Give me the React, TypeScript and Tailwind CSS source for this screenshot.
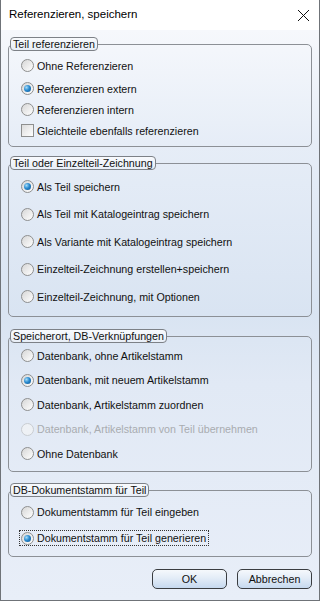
import { ReactNode } from 'react'

const font = "font-['Liberation_Sans',Arial,sans-serif]"

function Radio({ checked, disabled }: { checked?: boolean; disabled?: boolean }) {
  return (
    <span
      className={`flex h-[13px] w-[13px] shrink-0 items-center justify-center rounded-full border ${
        disabled
          ? 'border-[#c9cdd2] bg-[#eef1f5]'
          : 'border-[#8e8f8f] bg-[linear-gradient(135deg,#d6d6d6,#ffffff)]'
      }`}
    >
      {checked && (
        <span className="h-[7px] w-[7px] rounded-full bg-[radial-gradient(circle_at_35%_35%,#a6dcf8_0%,#2a8bd0_45%,#0b4f8c_100%)]" />
      )}
    </span>
  )
}

function Check() {
  return (
    <span className="flex h-[13px] w-[13px] shrink-0 border border-[#8e8f8f] bg-[linear-gradient(135deg,#dcdcdc,#ffffff)]" />
  )
}

function Row({
  label,
  checked,
  disabled,
  box,
  focus,
  h,
}: {
  label: string
  checked?: boolean
  disabled?: boolean
  box?: boolean
  focus?: boolean
  h: string
}) {
  return (
    <div className={`flex items-center pl-[12px] ${h}`}>
      <div
        className={`flex items-center gap-[3px] ${
          focus ? 'outline outline-1 outline-dotted outline-[#333] -ml-px pl-px pr-[2px]' : ''
        }`}
      >
        {box ? <Check /> : <Radio checked={checked} disabled={disabled} />}
        <span className={`text-[10.7px] leading-[14px] ${disabled ? 'text-[#a9acb0]' : 'text-[#111]'}`}>{label}</span>
      </div>
    </div>
  )
}

function Group({ title, children, className }: { title: string; children: ReactNode; className?: string }) {
  return (
    <div className={`relative rounded-[5px] border border-[#8c9096] ${className ?? ''}`}>
      <div className="absolute left-[1px] top-[-8px] rounded-[4px] border border-[#7d8187] bg-[linear-gradient(#f8fafd,#e8eef7)] px-[2px] text-[10.7px] leading-[12px] text-[#111]">
        {title}
      </div>
      {children}
    </div>
  )
}

export default function App() {
  return (
    <div className={`flex h-[601px] w-[320px] flex-col border-x border-b border-[#6f7378] ${font}`}>
      <div className="flex h-[30px] shrink-0 items-center justify-between bg-white pl-[8px] pr-[8px]">
        <span className="text-[11.5px] text-[#000]">Referenzieren, speichern</span>
        <svg width="13" height="13" viewBox="0 0 13 13" className="mr-[1px]">
          <path d="M1 1 L12 12 M12 1 L1 12" stroke="#111" strokeWidth="1" fill="none" />
        </svg>
      </div>

      <div className="flex flex-1 flex-col bg-[linear-gradient(#f6f8fc_0%,#e6edf7_20%,#d9e4f2_50%,#e1e9f5_62%,#e8eef8_100%)] px-[7px] pt-[14px]">
        <Group title="Teil referenzieren" className="pb-[5px] pt-[10px]">
          <Row h="h-[21px]" label="Ohne Referenzieren" />
          <Row h="h-[21px] mt-[2px]" label="Referenzieren extern" checked />
          <Row h="h-[21px]" label="Referenzieren intern" />
          <Row h="h-[21px]" label="Gleichteile ebenfalls referenzieren" box />
        </Group>

        <Group title="Teil oder Einzelteil-Zeichnung" className="mt-[16px] pb-[5px] pt-[9px]">
          <Row h="h-[27.5px]" label="Als Teil speichern" checked />
          <Row h="h-[27.5px]" label="Als Teil mit Katalogeintrag speichern" />
          <Row h="h-[27.5px]" label="Als Variante mit Katalogeintrag speichern" />
          <Row h="h-[27.5px]" label="Einzelteil-Zeichnung erstellen+speichern" />
          <Row h="h-[27.5px]" label="Einzelteil-Zeichnung, mit Optionen" />
        </Group>

        <Group title="Speicherort, DB-Verknüpfungen" className="mt-[19px] pb-[5px] pt-[7px]">
          <Row h="h-[24.5px]" label="Datenbank, ohne Artikelstamm" />
          <Row h="h-[24.5px]" label="Datenbank, mit neuem Artikelstamm" checked />
          <Row h="h-[24.5px]" label="Datenbank, Artikelstamm zuordnen" />
          <Row h="h-[24.5px]" label="Datenbank, Artikelstamm von Teil übernehmen" disabled />
          <Row h="h-[24.5px]" label="Ohne Datenbank" />
        </Group>

        <Group title="DB-Dokumentstamm für Teil" className="mt-[18px] pb-[5px] pt-[8px]">
          <Row h="h-[26px]" label="Dokumentstamm für Teil eingeben" />
          <Row h="h-[26px]" label="Dokumentstamm für Teil generieren" checked focus />
        </Group>

        <div className="mt-[12px] flex justify-end gap-[10px]">
          {['OK', 'Abbrechen'].map(b => (
            <button
              key={b}
              className="h-[20px] w-[75px] rounded-[5px] border border-[#3a3d41] bg-[linear-gradient(#f5f8fc,#e3ecf7_45%,#c6d9ef)] text-[10.7px] leading-[14px] text-[#111]"
            >
              {b}
            </button>
          ))}
        </div>
      </div>
    </div>
  )
}
